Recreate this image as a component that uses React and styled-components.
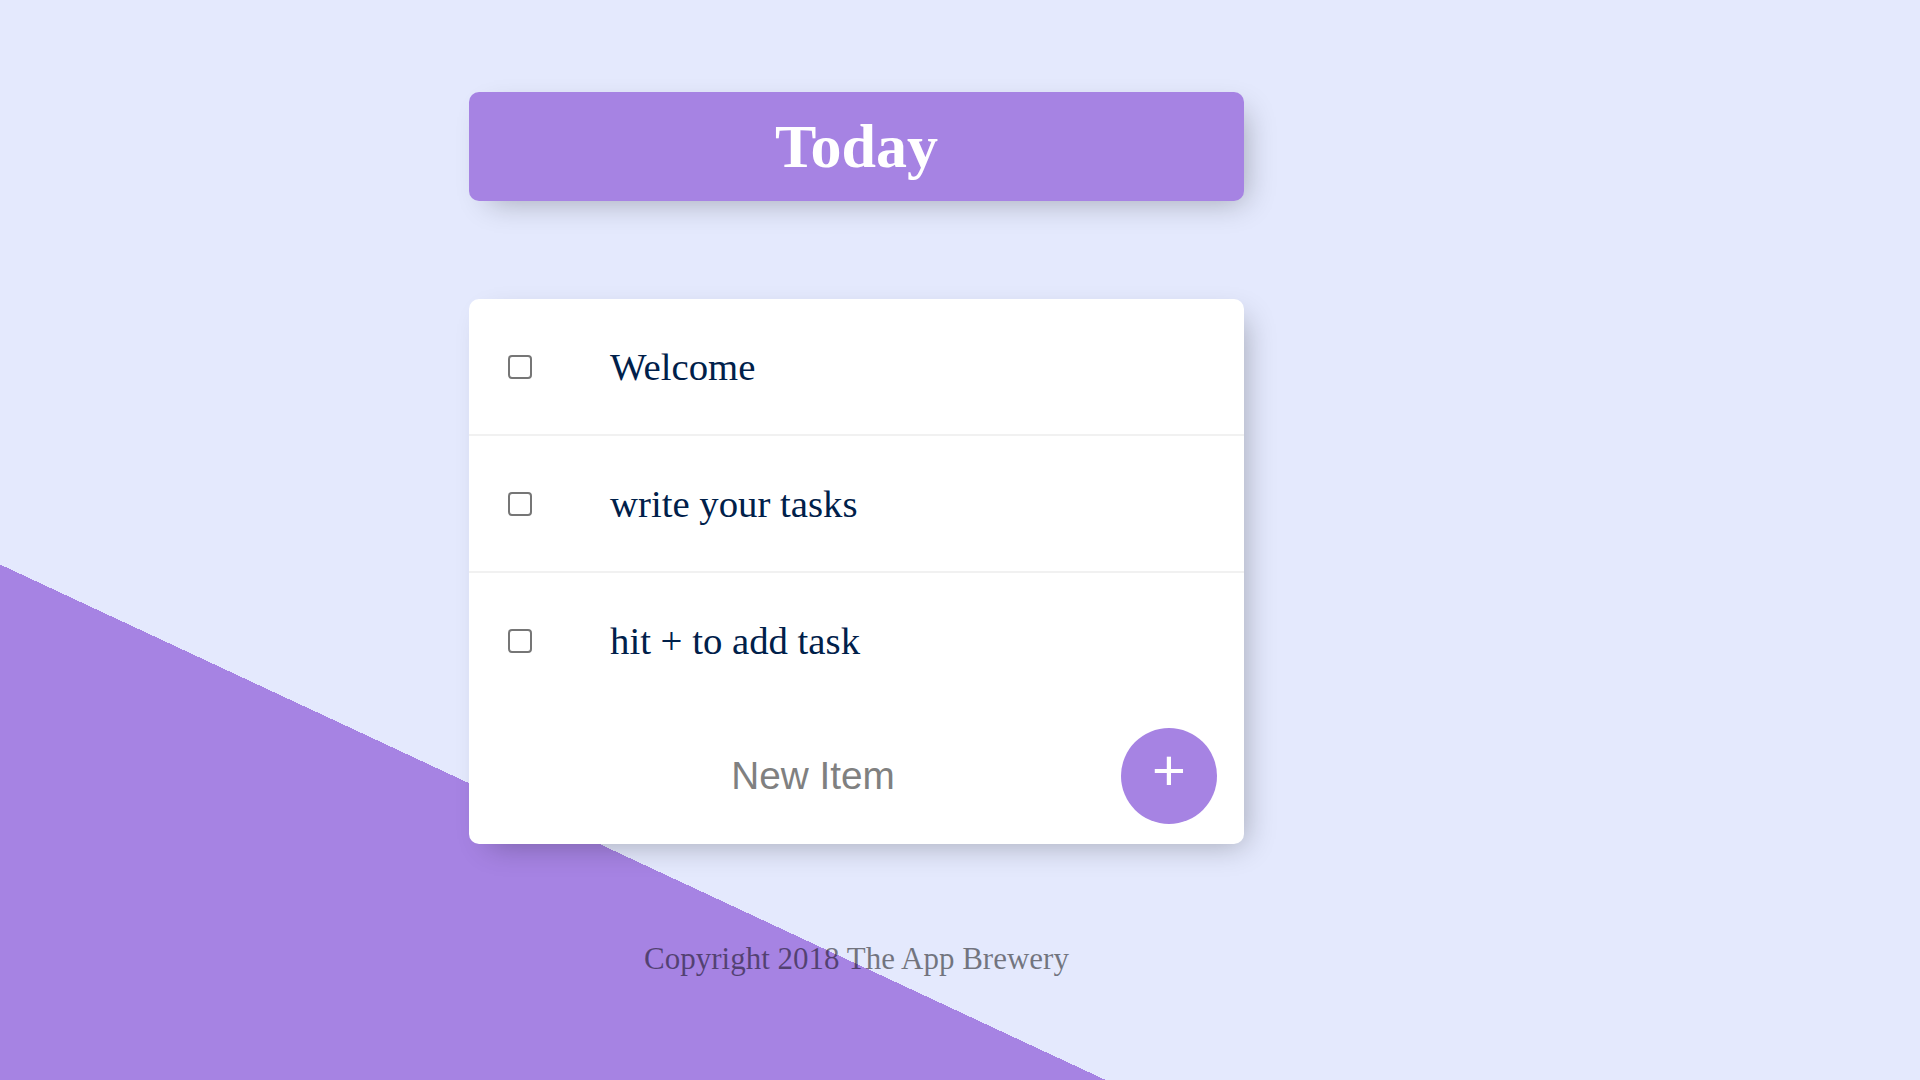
import React from 'react';
import styled, { createGlobalStyle } from 'styled-components';

const GlobalStyle = createGlobalStyle`
  html, body {
    margin: 0;
    padding: 0;
    overflow: hidden;
  }
  body {
    font-family: "Liberation Serif", "Times New Roman", serif;
  }
`;

const items = ['Welcome', 'write your tasks', 'hit + to add task'];

function App() {
    return (
        <Page>
            <GlobalStyle />
            <Column>
                <Heading>
                    <h1>Today</h1>
                </Heading>

                <ListBox>
                    {items.map((text) => (
                        <Item key={text}>
                            <Check type="checkbox" />
                            <ItemText>{text}</ItemText>
                        </Item>
                    ))}

                    <NewItemForm onSubmit={(e) => e.preventDefault()}>
                        <NewItemInput type="text" placeholder="New Item" autoComplete="off" />
                        <AddButton type="submit">+</AddButton>
                    </NewItemForm>
                </ListBox>

                <Footer>Copyright 2018 The App Brewery</Footer>
            </Column>
        </Page>
    );
}

export default App;

const Page = styled.div`
    width: 1920px;
    height: 1080px;
    box-sizing: border-box;
    padding: 92px 0 0 469px;
    overflow: hidden;
    background-color: #e4e9fd;
    background-image: linear-gradient(25deg, #a683e3 26.1%, #e4e9fd 26.1%);
`;

const Column = styled.div`
    width: 775px;
    display: flex;
    flex-direction: column;
`;

const Box = styled.div`
    border-radius: 10px;
    box-shadow: 10px 10px 29px -10px rgba(0, 0, 0, 0.3);
`;

const Heading = styled(Box)`
    background-color: #a683e3;
    text-align: center;

    h1 {
        margin: 0;
        padding: 19px;
        color: #fff;
        font-size: 62px;
        font-weight: 700;
        line-height: 71px;
    }
`;

const ListBox = styled(Box)`
    margin-top: 98px;
    background: #fff;
    display: flex;
    flex-direction: column;
`;

const Item = styled.div`
    min-height: 135px;
    display: flex;
    align-items: center;
    border-bottom: 2px solid #f1f1f1;

    &:nth-child(3) {
        border-bottom: 0;
    }
`;

const Check = styled.input`
    appearance: none;
    -webkit-appearance: none;
    flex: none;
    width: 24px;
    height: 24px;
    margin: 0 39px;
    box-sizing: border-box;
    border: 2px solid #767676;
    border-radius: 4px;
    background: #fff;
    cursor: pointer;

    &:checked {
        background: #a683e3;
        border-color: #a683e3;
    }
`;

const ItemText = styled.p`
    margin: 0;
    padding: 0 39px;
    font-size: 38.75px;
    font-weight: 200;
    color: #00204a;
`;

const NewItemForm = styled.form`
    height: 136px;
    display: flex;
    align-items: center;
    padding-left: 41px;
    gap: 5px;
`;

const NewItemInput = styled.input`
    width: 606px;
    height: 116px;
    padding: 0;
    border: none;
    background: transparent;
    text-align: center;
    font-family: "Liberation Sans", Arial, sans-serif;
    font-size: 38.75px;
    font-weight: 200;
    color: #333;

    &::placeholder {
        color: grey;
        opacity: 1;
    }

    &:focus {
        outline: none;
        box-shadow: inset 0 -6px 0 0 #a683e3;
    }
`;

const AddButton = styled.button`
    flex: none;
    width: 96px;
    height: 96px;
    border-radius: 50%;
    border: 0;
    padding: 0 0 12px;
    background-color: #a683e3;
    color: #fff;
    font-family: "Liberation Sans", Arial, sans-serif;
    font-size: 58px;
    line-height: 1;
    cursor: pointer;
`;

const Footer = styled.footer`
    margin-top: 97px;
    text-align: center;
    font-size: 31px;
    line-height: 36px;
    color: rgba(0, 0, 0, 0.5);
`;
